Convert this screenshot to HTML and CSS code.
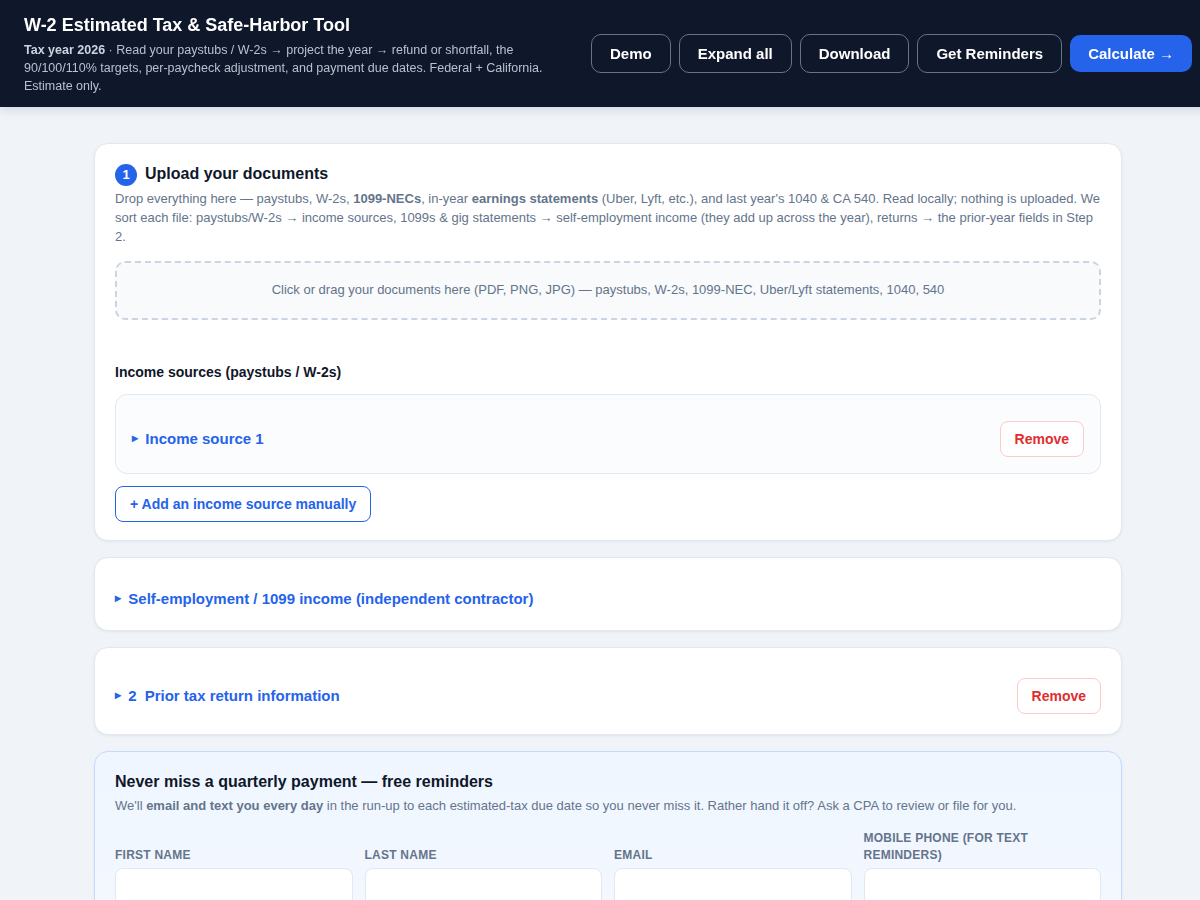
FILE: index.html
```html
<!DOCTYPE html>
<html lang="en">
<head>
    <meta charset="UTF-8">
    <meta name="viewport" content="width=device-width, initial-scale=1.0">
    <title>W-2 Estimated Tax &amp; Safe-Harbor Tool</title>
    <link rel="stylesheet" href="styles.css">
</head>
<body>

<header class="topbar">
    <div class="topbar-text">
        <h1>W-2 Estimated Tax &amp; Safe-Harbor Tool</h1>
        <p><strong>Tax year 2026</strong> · Read your paystubs / W-2s → project the year → refund or shortfall, the 90/100/110% targets, per-paycheck adjustment, and payment due dates. Federal + California. Estimate only.</p>
    </div>
    <div class="topbar-actions">
        <button class="btn-ghost">Demo</button>
        <button class="btn-ghost">Expand all</button>
        <button class="btn-ghost">Download</button>
        <button class="btn-ghost">Get Reminders</button>
        <button class="btn-primary">Calculate →</button>
    </div>
</header>

<main class="container">
    <section class="card card-upload">
        <h2 class="step-title"><span class="step-num">1</span><span class="step-text">Upload your documents</span></h2>
        <p class="hint">Drop everything here — paystubs, W-2s, <strong>1099-NECs</strong>, in-year <strong>earnings statements</strong> (Uber, Lyft, etc.), and last year's 1040 &amp; CA 540. Read locally; nothing is uploaded. We sort each file: paystubs/W-2s → income sources, 1099s &amp; gig statements → self-employment income (they add up across the year), returns → the prior-year fields in Step 2.</p>
        <div class="dropzone">Click or drag your documents here (PDF, PNG, JPG) — paystubs, W-2s, 1099-NEC, Uber/Lyft statements, 1040, 540</div>

        <h3 class="sub-title">Income sources (paystubs / W-2s)</h3>
        <div class="source-row">
            <div class="toggle"><span class="caret">▸</span>Income source 1</div>
            <button class="btn-remove">Remove</button>
        </div>
        <button class="btn-add">+ Add an income source manually</button>
    </section>

    <section class="card card-row">
        <div class="toggle toggle-lg"><span class="caret">▸</span>Self-employment / 1099 income (independent contractor)</div>
    </section>

    <section class="card card-row card-prior">
        <div class="toggle toggle-lg"><span class="caret">▸</span><span class="toggle-num">2</span>Prior tax return information</div>
        <button class="btn-remove">Remove</button>
    </section>

    <section class="card card-reminders">
        <h2 class="reminders-title">Never miss a quarterly payment — free reminders</h2>
        <p class="hint">We'll <strong>email and text you every day</strong> in the run-up to each estimated-tax due date so you never miss it. Rather hand it off? Ask a CPA to review or file for you.</p>
        <div class="form-grid">
            <label class="field"><span>First name</span><input type="text"></label>
            <label class="field"><span>Last name</span><input type="text"></label>
            <label class="field"><span>Email</span><input type="text"></label>
            <label class="field"><span>Mobile phone (for text reminders)</span><input type="text"></label>
        </div>
    </section>
</main>

</body>
</html>
```

FILE: styles.css
```css
html, body {
    height: 900px;
    overflow: hidden;
}

body {
    width: 1216px;
    margin: 0;
    font-family: "Liberation Sans", Arial, sans-serif;
    background: #f0f4f9;
    color: #0f172a;
}

/* Top bar */
.topbar {
    position: sticky;
    top: 0;
    z-index: 10;
    display: flex;
    justify-content: space-between;
    align-items: center;
    gap: 24px;
    box-sizing: border-box;
    height: 107px;
    padding: 0 24px;
    background: #0f172a;
    box-shadow: 0 2px 10px rgba(15, 23, 42, 0.15);
    color: #fff;
}

.topbar-text {
    width: 535px;
    padding-top: 3px;
}

.topbar h1 {
    margin: 0 0 6px;
    font-size: 18px;
    line-height: 20px;
    font-weight: 700;
}

.topbar p {
    margin: 0;
    font-size: 12.5px;
    line-height: 18px;
    color: #b8c1cf;
}

.topbar p strong {
    color: #cbd5e1;
}

.topbar-actions {
    display: flex;
    align-items: center;
    gap: 8px;
    flex-shrink: 0;
}

button {
    font-family: inherit;
    font-weight: 700;
    cursor: pointer;
}

.btn-ghost, .btn-primary {
    padding: 10px 18px;
    font-size: 15px;
    line-height: 17px;
    color: #fff;
    border-radius: 10px;
}

.btn-ghost {
    background: transparent;
    border: 1px solid #64748b;
}

.btn-primary {
    background: #2563eb;
    border: 0;
}

/* Cards */
.container {
    width: 1028px;
    margin: 36px auto 0;
}

.card {
    box-sizing: border-box;
    margin-bottom: 16px;
    padding: 20px;
    background: #fff;
    border: 1px solid #e2e8f0;
    border-radius: 14px;
    box-shadow: 0 1px 3px rgba(15, 23, 42, 0.06);
}

.card-upload {
    padding-bottom: 18px;
}

.step-title {
    display: flex;
    align-items: center;
    margin: 0 0 3px;
    font-size: 16px;
    line-height: 20px;
    font-weight: 700;
}

.step-num {
    display: inline-flex;
    justify-content: center;
    align-items: center;
    width: 22px;
    height: 22px;
    margin-right: 8px;
    background: #2563eb;
    border-radius: 50%;
    color: #fff;
    font-size: 13px;
}

.step-text {
    margin-bottom: 2px;
}

.hint {
    margin: 0;
    font-size: 13px;
    line-height: 19px;
    color: #64748b;
}

.dropzone {
    margin-top: 15px;
    padding: 17px 18px 19px;
    font-size: 13px;
    line-height: 19px;
    text-align: center;
    color: #64748b;
    background: #f8fafc;
    border: 2px dashed #cbd5e1;
    border-radius: 10px;
}

.sub-title {
    margin: 43px 0 13px;
    font-size: 14px;
    line-height: 18px;
    font-weight: 700;
}

.source-row {
    display: flex;
    justify-content: space-between;
    align-items: center;
    box-sizing: border-box;
    height: 80px;
    padding: 10px 16px 0;
    background: #fbfcfe;
    border: 1px solid #e2e8f0;
    border-radius: 12px;
}

.toggle {
    padding-bottom: 2px;
    font-size: 15px;
    font-weight: 700;
    color: #2563eb;
}

.caret {
    position: relative;
    top: -2px;
    margin-right: 7.3px;
    font-size: 12px;
}

.toggle-num {
    margin-right: 8px;
}

.btn-remove {
    padding: 9px 14px;
    font-size: 14px;
    line-height: 16px;
    color: #e02d2d;
    background: #fff;
    border: 1px solid #fecaca;
    border-radius: 8px;
}

.btn-add {
    margin-top: 12px;
    padding: 9px 14px;
    font-size: 14px;
    line-height: 16px;
    color: #2563eb;
    background: #fff;
    border: 1px solid #2563eb;
    border-radius: 8px;
}

.card-row {
    display: flex;
    justify-content: space-between;
    align-items: center;
    height: 74px;
    padding-top: 30px;
}

.card-prior {
    height: 88px;
}

.card-reminders {
    background: linear-gradient(180deg, #eff6ff, #f4f8ff);
    border-color: #bfdbfe;
}

.reminders-title {
    margin: 0 0 4px;
    font-size: 16px;
    line-height: 20px;
    font-weight: 700;
}

.form-grid {
    display: grid;
    grid-template-columns: repeat(4, 1fr);
    gap: 12px;
    align-items: end;
    margin-top: 15px;
}

.field span {
    display: block;
    margin-bottom: 4px;
    font-size: 12px;
    line-height: 17px;
    font-weight: 700;
    letter-spacing: 0.02em;
    text-transform: uppercase;
    color: #64748b;
}

.field input {
    display: block;
    box-sizing: border-box;
    width: 100%;
    height: 40px;
    background: #fff;
    border: 1px solid #e2e8f0;
    border-radius: 8px;
}
```
